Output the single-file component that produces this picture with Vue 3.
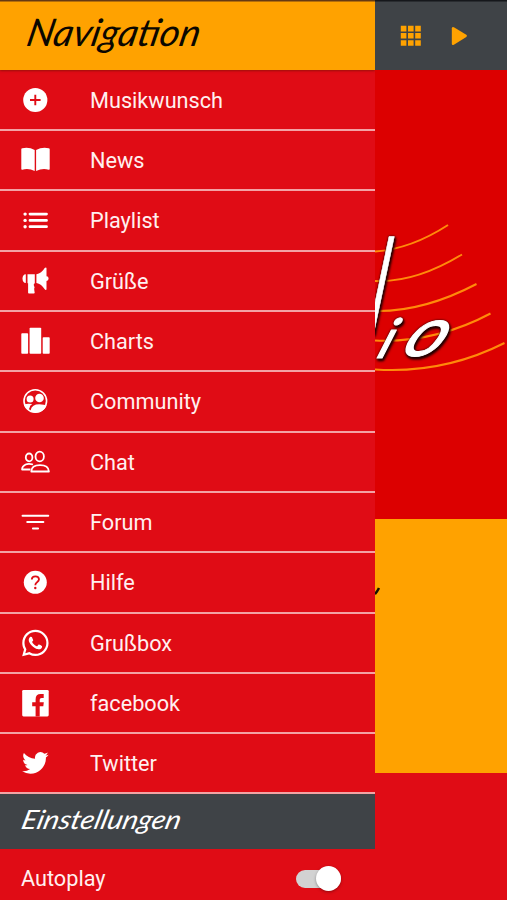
<script setup>
const items = [
  { label: 'Musikwunsch', icon: 'add' },
  { label: 'News', icon: 'book' },
  { label: 'Playlist', icon: 'list' },
  { label: 'Grüße', icon: 'megaphone' },
  { label: 'Charts', icon: 'podium' },
  { label: 'Community', icon: 'community' },
  { label: 'Chat', icon: 'people' },
  { label: 'Forum', icon: 'filter' },
  { label: 'Hilfe', icon: 'help' },
  { label: 'Grußbox', icon: 'whatsapp' },
  { label: 'facebook', icon: 'facebook' },
  { label: 'Twitter', icon: 'twitter' },
]
</script>

<template>
  <div class="screen">
    <nav class="drawer">
      <header class="title">
        <svg width="375" height="70" viewBox="0 0 375 70">
          <text class="script" transform="translate(25 46) skewX(-12)" textLength="173" lengthAdjust="spacingAndGlyphs" font-size="38">Navigation</text>
        </svg>
      </header>
      <ul class="menu">
        <li v-for="item in items" :key="item.label" class="row">
          <svg class="icon" width="30" height="30" viewBox="0 0 30 30" fill="#fff">
            <template v-if="item.icon === 'add'">
              <circle cx="15.3" cy="15" r="12.1" />
              <path d="M15.3 9.7v10.6M10 15h10.6" stroke="#e00c15" stroke-width="1.9" />
            </template>
            <template v-else-if="item.icon === 'book'">
              <path d="M1.3 4.300Q1.300 3.500 2.300 3.300Q9 1.900 14.700 5V25.900Q8.500 22.900 2.300 24.700Q1.300 24.900 1.300 23.900Z" />
              <path d="M29.700 4.300Q29.700 3.500 28.700 3.300Q22 1.900 16.100 5V25.900Q22.500 22.900 28.700 24.700Q29.700 24.900 29.700 23.900Z" />
            </template>
            <template v-else-if="item.icon === 'list'">
              <circle cx="5.100" cy="9.100" r="1.700" /><circle cx="5.100" cy="15.400" r="1.700" /><circle cx="5.100" cy="21.700" r="1.700" />
              <path d="M10 9.100h16.500M10 15.400h16.500M10 21.700h16.500" stroke="#fff" stroke-width="2.800" stroke-linecap="round" />
            </template>
            <template v-else-if="item.icon === 'megaphone'">
              <path d="M5.800 8.200v8.900Q2.600 17 2.500 12.600Q2.600 8.300 5.800 8.200Z" />
              <path d="M7.500 8.200h7.300v9.100q-1.500.5-.9 2.400l.7 1.600q-.8 1.300-.2 3.600l.3 1.900q0 .8-.9.800H8.900q-.8 0-.8-.8V17.200h-.6Z" />
              <path d="M16.400 8.200Q21.500 7.600 24.700 2.100q.4-.6 1.200-.6q.6 0 .6.800v7.900q2.100 0 2.100 2.400t-2.100 2.500v8.200q0 .8-.7.800q-.6 0-1.100-.8Q21.500 18.200 16.400 17.100Z" />
            </template>
            <template v-else-if="item.icon === 'podium'">
              <rect x="1.300" y="7.200" width="6.800" height="20.600" rx=".8" /><rect x="9.600" y="1.800" width="11.600" height="26" rx=".8" /><rect x="22.700" y="11.200" width="7" height="16.600" rx=".8" />
            </template>
            <template v-else-if="item.icon === 'community'">
              <circle cx="15.300" cy="15" r="11.300" fill="none" stroke="#fff" stroke-width="1.600" />
              <circle cx="10.100" cy="12.900" r="3.500" /><circle cx="19.500" cy="12" r="4.300" />
              <path d="M4.300 18.200Q8 17.300 12.200 18.100Q9.600 19.500 9.400 22.300L8 24Q5 21.600 4.300 18.200Z" />
              <path d="M10.600 24.200Q11.900 18.300 19.300 18.300Q24.500 18.300 26.400 19.800Q23.600 26.500 15.300 26.800Q12.700 26.600 10.200 25.300Z" />
            </template>
            <g v-else-if="item.icon === 'people'" fill="none" stroke="#fff" stroke-width="1.800" stroke-linejoin="round">
              <ellipse cx="9.100" cy="10.400" rx="3.300" ry="3.900" />
              <ellipse cx="19.700" cy="9.500" rx="4.200" ry="4.900" />
              <path d="M13 17.500Q6.500 15.400 3 19.500Q2 21 2.100 22.500H10.500" />
              <path d="M11.300 24.500Q11.500 18.200 20 18.200T28.900 24.500Z" />
            </g>
            <path v-else-if="item.icon === 'filter'" d="M2.500 8.700h25.800M7.200 15h16.200M12.900 21.500h5.200" stroke="#fff" stroke-width="1.900" stroke-linecap="round" />
            <template v-else-if="item.icon === 'help'">
              <circle cx="15.300" cy="15.300" r="11.500" />
              <path d="M11.800 12.500Q11.900 9.300 15.400 9.300T19 12.300Q19 13.800 17 15.300Q15.300 16.500 15.300 18.200" fill="none" stroke="#e00c15" stroke-width="1.800" />
              <circle cx="15.300" cy="21" r="1.200" fill="#e00c15" />
            </template>
            <path v-else-if="item.icon === 'whatsapp'" transform="translate(2.100 1.800) scale(1.105)" d="M17.472 14.382c-.297-.149-1.758-.867-2.03-.967-.273-.099-.471-.148-.67.15-.197.297-.767.966-.94 1.164-.173.199-.347.223-.644.075-.297-.15-1.255-.463-2.39-1.475-.883-.788-1.48-1.761-1.653-2.059-.173-.297-.018-.458.13-.606.134-.133.298-.347.446-.52.149-.174.198-.298.298-.497.099-.198.05-.371-.025-.52-.075-.149-.669-1.612-.916-2.207-.242-.579-.487-.5-.669-.51-.173-.008-.371-.01-.57-.01-.198 0-.52.074-.792.372-.272.297-1.04 1.016-1.04 2.479 0 1.462 1.065 2.875 1.213 3.074.149.198 2.096 3.2 5.077 4.487.709.306 1.262.489 1.694.625.712.227 1.36.195 1.871.118.571-.085 1.758-.719 2.006-1.413.248-.694.248-1.289.173-1.413-.074-.124-.272-.198-.57-.347m-5.421 7.403h-.004a9.87 9.87 0 01-5.031-1.378l-.361-.214-3.741.982.998-3.648-.235-.374a9.86 9.86 0 01-1.51-5.26c.001-5.45 4.436-9.884 9.888-9.884 2.64 0 5.122 1.03 6.988 2.898a9.825 9.825 0 012.893 6.994c-.003 5.45-4.437 9.884-9.885 9.884m8.413-18.297A11.815 11.815 0 0012.05 0C5.495 0 .16 5.335.157 11.892c0 2.096.547 4.142 1.588 5.945L.057 24l6.305-1.654a11.882 11.882 0 005.683 1.448h.005c6.554 0 11.89-5.335 11.893-11.893a11.821 11.821 0 00-3.48-8.413Z" />
            <template v-else-if="item.icon === 'facebook'">
              <rect x="2.200" y="2" width="26.500" height="26.400" rx="1.300" />
              <path d="M15.600 28.500V18.300h-3.400v-4.100h3.400v-2.800Q15.600 6 20.700 6h3v3.900h-2.100q-1.900 0-1.900 1.900v2.400h4.100l-.5 4.100h-3.600v10.200Z" fill="#e00c15" />
            </template>
            <path v-else transform="translate(2.100 1.600) scale(1.105)" d="M23.953 4.57a10 10 0 01-2.825.775 4.958 4.958 0 002.163-2.723c-.951.555-2.005.959-3.127 1.184a4.92 4.92 0 00-8.384 4.482C7.69 8.095 4.067 6.13 1.64 3.162a4.822 4.822 0 00-.666 2.475c0 1.71.87 3.213 2.188 4.096a4.904 4.904 0 01-2.228-.616v.06a4.923 4.923 0 003.946 4.827 4.996 4.996 0 01-2.212.085 4.936 4.936 0 004.604 3.417 9.867 9.867 0 01-6.102 2.105c-.39 0-.779-.023-1.17-.067a13.995 13.995 0 007.557 2.209c9.053 0 13.998-7.496 13.998-13.985 0-.21 0-.42-.015-.63A9.935 9.935 0 0024 4.59z" />
          </svg>
          <span>{{ item.label }}</span>
        </li>
      </ul>
      <div class="section">
        <svg width="375" height="55" viewBox="0 0 375 55">
          <text class="script light" transform="translate(20 35) skewX(-14)" textLength="159" lengthAdjust="spacingAndGlyphs" font-size="26.500">Einstellungen</text>
        </svg>
      </div>
      <div class="setting">
        <span>Autoplay</span>
        <span class="toggle"><span class="knob"></span></span>
      </div>
    </nav>
    <main class="page">
      <div class="toolbar">
        <svg width="22" height="22" viewBox="0 0 22 22" fill="#ffa200">
          <path d="M.8.800h5.600v5.600H.8zM8 .8h5.600v5.600H8zM15.200.8h5.600v5.600h-5.600zM.8 8h5.600v5.600H.8zM8 8h5.600v5.600H8zM15.200 8h5.600v5.600h-5.600zM.8 15.200h5.600v5.600H.8zM8 15.200h5.600v5.600H8zM15.200 15.200h5.600v5.600h-5.600z" />
        </svg>
        <svg width="17" height="20" viewBox="0 0 17 20" fill="#ffa200">
          <path d="M.8 2.500Q.8.200 2.900 1.200L15.300 8.800Q16.700 9.900 15.300 11L2.900 18.700Q.8 19.600.8 17.400Z" />
        </svg>
      </div>
      <svg class="hero" width="132" height="449" viewBox="375 70 132 449">
        <g fill="none" stroke="#ff8a0a" stroke-width="2">
          <path d="M375 251.500Q411 249 448 225" />
          <path d="M375 281Q415 283 462 254.500" />
          <path d="M375 311Q423 312 476.500 284" />
          <path d="M375 340.500Q435 343 490.500 313.500" />
          <path d="M375 369.500Q443 374 504.500 343" />
        </g>
        <g class="logo">
          <text transform="translate(364 334) skewX(-12)" font-size="132" textLength="14" lengthAdjust="spacingAndGlyphs">l</text>
          <text transform="translate(373 358) skewX(-27)" font-size="55">i</text>
          <text transform="translate(396 356) skewX(-34)" font-size="69">o</text>
        </g>
      </svg>
      <div class="panel">
        <svg width="6" height="10" viewBox="0 0 6 10"><path d="M0 7Q2 5 4 1" fill="none" stroke="#171000" stroke-width="2.500" /></svg>
      </div>
    </main>
  </div>
</template>

<style>
body { margin: 0; overflow: hidden; }
</style>

<style scoped>
.screen {
  display: flex;
  width: 507px;
  height: 900px;
  overflow: hidden;
  background: #e00c15;
  font-family: Roboto, sans-serif;
  font-size: 21.7px;
  color: #fff0f0;
}
svg { display: block; flex: none; }
.drawer { width: 375px; flex: none; }
.title {
  box-sizing: border-box;
  height: 70px;
  background: linear-gradient(#663a13 0 1px, #b36e0b 1px 2px, #ffa200 2px);
  box-shadow: 0 1px 2px rgba(100, 20, 0, 0.55);
}
.script { font-family: Lato, sans-serif; font-style: italic; fill: #0b0700; }
.light { fill: #fff; }
.menu { margin: 0; padding: 0.7px 0 0; list-style: none; }
.row {
  box-sizing: border-box;
  display: flex;
  align-items: center;
  gap: 40px;
  height: 60.32px;
  padding-left: 20px;
  border-bottom: 2px solid #f3a3a5;
}
.row span { padding-top: 1px; }
.section { height: 54.4px; background: #3f4347; overflow: hidden; }
.setting {
  display: flex;
  align-items: center;
  justify-content: space-between;
  height: 60px;
  padding: 0 34px 0 21px;
}
.toggle {
  display: flex;
  align-items: center;
  justify-content: flex-end;
  width: 45px;
  height: 18px;
  border-radius: 9px;
  background: #d2d2d2;
}
.knob {
  width: 25px;
  height: 25px;
  border-radius: 50%;
  background: #fff;
  box-shadow: 0 1px 3px rgba(0, 0, 0, 0.35);
}
.page { width: 132px; flex: none; }
.toolbar {
  box-sizing: border-box;
  display: flex;
  align-items: center;
  gap: 29px;
  height: 70px;
  padding: 2px 0 0 25px;
  background: linear-gradient(#15171b 0 1px, #292c30 1px 2px, #3f4347 2px);
}
.hero { background: #dc0000; }
.logo {
  font-family: Lato, sans-serif;
  fill: #fff;
  stroke: #fff;
  stroke-width: 1.2px;
  stroke-linejoin: round;
  filter: drop-shadow(1.5px 2px 1px #210000) drop-shadow(0 0 1px #210000);
}
.panel { height: 253.5px; background: #ffa200; display: flex; align-items: flex-start; }
.panel svg { margin-top: 68px; }
</style>
